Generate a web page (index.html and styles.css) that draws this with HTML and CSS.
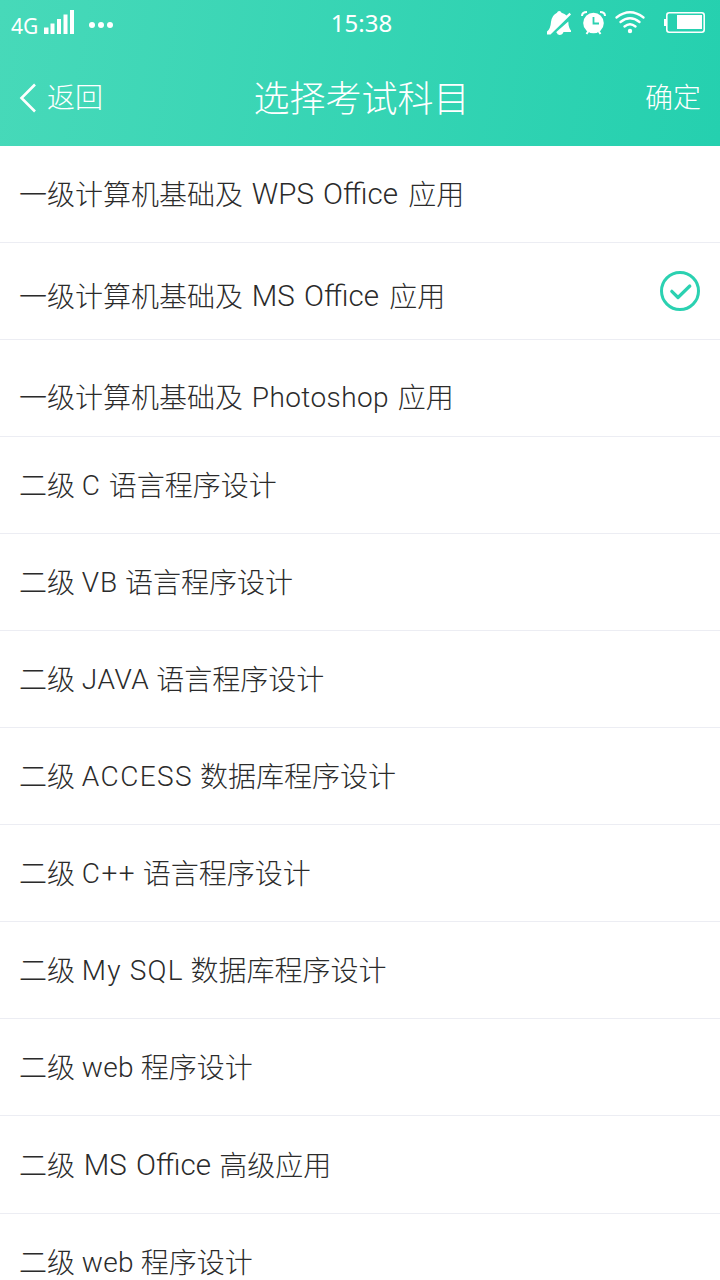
FILE: index.html
```
<!DOCTYPE html>
<html lang="zh-CN">
<head>
<meta charset="utf-8">
<title>选择考试科目</title>
<link rel="stylesheet" href="styles.css">
</head>
<body>
<header class="header">
  <div class="status">
    <div class="status-left">
      <span class="network">4G</span>
      <svg class="signal" width="31" height="25" viewBox="0 0 31 25" fill="#fff"><path d="M0 17.500h4.500v6.500H0zM6.500 13.500h4v10.500h-4zM13 9h4v15h-4zM19.500 4.500h4v19.500h-4zM26 0h4v24h-4z"/></svg>
      <svg class="dots" width="26" height="8" viewBox="0 0 26 8" fill="#fff"><circle cx="4" cy="4" r="3"/><circle cx="13" cy="4" r="3"/><circle cx="22" cy="4" r="3"/></svg>
    </div>
    <time class="clock">15:38</time>
    <svg class="status-icons" width="160" height="26" viewBox="546 10 160 26" fill="none" stroke="#fff">
      <g fill="#fff" stroke="none">
        <path d="M547 33.500V31.500Q550.500 29 551 22Q552 15 557 12.800Q557.500 11 559.200 11Q561 11 561.500 12.800Q565 13.800 566.500 15.500L569.500 12.800L571 14.500L550.500 34.500H547z"/>
        <path d="M568.300 21.500Q568.500 28 571 30.500V32H563.500Q562.500 35 559.500 35Q557 34.500 556.800 32.500H555.800L558 30.500z"/>
        <circle cx="593.500" cy="23" r="10.300"/>
      </g>
      <path d="M593.500 17v6.500h5.500" stroke="#2bd1b1" stroke-width="1.800"/>
      <path d="M582 16Q582 12 587 12M600 12Q605 12 605 16M588.500 31l-2 3M598.500 31l2 3" stroke-width="2"/>
      <path d="M616.500 17.500Q630 7 643.500 17.500M620.500 22Q630 14.500 639.500 22M624.500 26.500Q630 22 635.500 26.500" stroke-width="2.300" stroke-linecap="round"/>
      <circle cx="630" cy="31" r="2.200" fill="#fff" stroke="none"/>
      <rect x="666.800" y="12.800" width="37.400" height="19.400" rx="2.500" stroke-width="1.600"/>
      <path d="M664 19h2.500v7H664zM677 15h25v14h-25z" fill="#fff" stroke="none"/>
    </svg>
  </div>
  <nav class="nav">
    <a class="back"><svg width="18" height="30" viewBox="0 0 18 30" fill="none" stroke="#fff" stroke-width="2.600"><path d="M16 1.500L2.500 15L16 28.500"/></svg><span>返回</span></a>
    <h1 class="title">选择考试科目</h1>
    <a class="confirm">确定</a>
  </nav>
</header>
<ul class="subjects">
  <li class="row"><span>一级计算机基础及 <span class="latin office spaced">WPS Office</span> 应用</span></li>
  <li class="row lower"><span>一级计算机基础及 <span class="latin office spaced">MS Office</span> 应用</span>
    <svg class="check" width="40" height="40" viewBox="0 0 40 40" fill="none" stroke="#2bd1b1"><circle cx="20" cy="20" r="18.500" stroke-width="3"/><path d="M11.800 20.300L18 26.500L29.800 15" stroke-width="3.200" stroke-linecap="round" stroke-linejoin="round"/></svg></li>
  <li class="row lowest"><span>一级计算机基础及 <span class="latin photoshop">Photoshop</span> 应用</span></li>
  <li class="row"><span>二级 <span class="latin single">C</span> 语言程序设计</span></li>
  <li class="row"><span>二级 <span class="latin short">VB</span> 语言程序设计</span></li>
  <li class="row"><span>二级 <span class="latin">JAVA</span> 语言程序设计</span></li>
  <li class="row"><span>二级 <span class="latin open">ACCESS</span> 数据库程序设计</span></li>
  <li class="row"><span>二级 <span class="latin open">C++</span> 语言程序设计</span></li>
  <li class="row"><span>二级 <span class="latin sql">My SQL</span> 数据库程序设计</span></li>
  <li class="row"><span>二级 <span class="latin web">web</span> 程序设计</span></li>
  <li class="row tall"><span>二级 <span class="latin office">MS Office</span> 高级应用</span></li>
  <li class="row"><span>二级 <span class="latin web">web</span> 程序设计</span></li>
</ul>
</body>
</html>
```
FILE: styles.css
```
* { box-sizing: border-box; }
body {
  margin: 0;
  height: 1280px;
  overflow: hidden;
  background: #fff;
  color: #2b2b2b;
  font-family: Roboto, "Noto Sans CJK SC", sans-serif;
  font-size: 28px;
  font-weight: 300;
}
.header {
  height: 146px;
  color: #fff;
  background: linear-gradient(100deg, #47d9b9, #25d0af);
}
.status {
  display: grid;
  grid-template-columns: 1fr auto 1fr;
  align-items: center;
  height: 46px;
  padding: 0 14px 0 11px;
  font-family: "Noto Sans", sans-serif;
  font-weight: 400;
}
.status-left { display: flex; align-items: center; height: 46px; }
.network { font-size: 21px; line-height: 40px; padding-top: 5px; width: 33px; }
.signal { margin-top: -1px; }
.dots { margin: 4px 0 0 13px; }
.clock { font-size: 24px; line-height: 46px; padding-left: 6px; }
.status-icons { justify-self: end; }
.nav {
  display: grid;
  grid-template-columns: 1fr auto 1fr;
  align-items: center;
  height: 100px;
  padding: 3px 19px 0;
}
.back { display: flex; align-items: center; gap: 10px; }
.back span, .confirm { padding-bottom: 3px; }
.title { margin: 0 0 4px; padding-left: 3px; font-size: 36px; font-weight: 300; }
.confirm { justify-self: end; }
.subjects { margin: 0; padding: 0; list-style: none; }
.row {
  display: flex;
  align-items: center;
  justify-content: space-between;
  height: 97px;
  padding: 0 20px 0 19px;
  border-bottom: 1px solid #ecedf3;
  line-height: 40px;
  white-space: nowrap;
}
.row > span { padding-top: 4px; }
.row.tall { height: 98px; }
.row.lower > span { padding-top: 13px; }
.row.lowest > span { padding-top: 21px; }
.latin { letter-spacing: 0.6px; line-height: 1; vertical-align: 1px; }
.office { margin: 0 1.5px 0 2px; font-size: 29.5px; letter-spacing: 0; word-spacing: 2px; }
.spaced { margin-right: 3.5px; }
.photoshop { margin: 0 2px; letter-spacing: 0.4px; }
.single { letter-spacing: 2px; }
.short { letter-spacing: 0.9px; }
.open { letter-spacing: 1.4px; }
.sql { letter-spacing: 1.2px; }
.web { letter-spacing: 0.3px; }
```
